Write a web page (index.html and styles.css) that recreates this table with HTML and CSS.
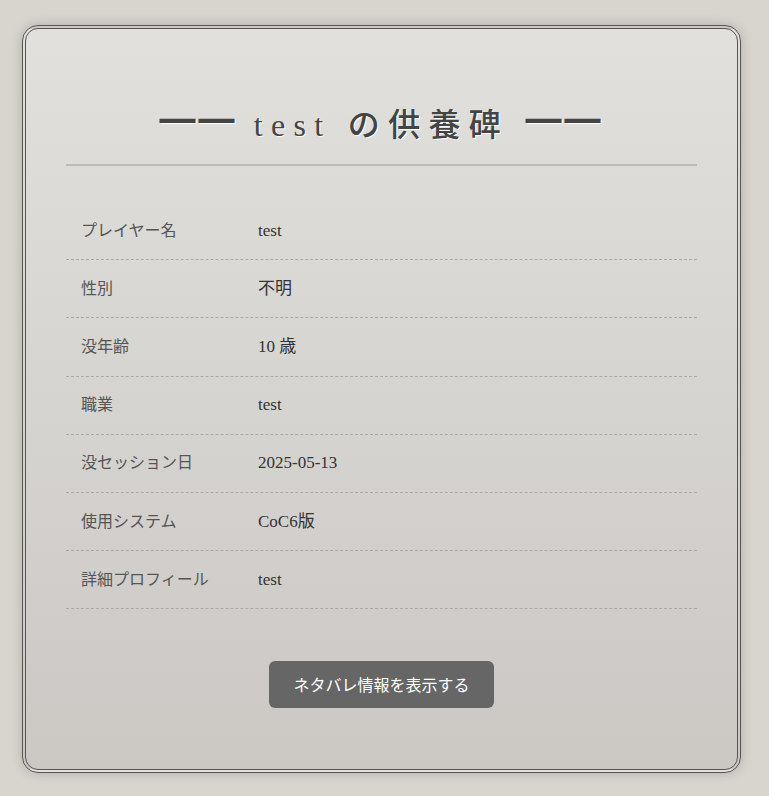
FILE: index.html
```html
<!DOCTYPE html>
<html lang="ja">
<head>
<meta charset="utf-8">
<title>test の供養碑</title>
<link rel="stylesheet" href="styles.css">
</head>
<body>
<main class="card">
  <h1 class="title"><span class="rule">━━</span> test の供養碑 <span class="rule">━━</span></h1>
  <dl class="info">
    <div class="row"><dt>プレイヤー名</dt><dd>test</dd></div>
    <div class="row"><dt>性別</dt><dd>不明</dd></div>
    <div class="row"><dt>没年齢</dt><dd>10 歳</dd></div>
    <div class="row"><dt>職業</dt><dd>test</dd></div>
    <div class="row"><dt>没セッション日</dt><dd>2025-05-13</dd></div>
    <div class="row"><dt>使用システム</dt><dd>CoC6版</dd></div>
    <div class="row"><dt>詳細プロフィール</dt><dd>test</dd></div>
  </dl>
  <div class="actions">
    <button class="reveal" type="button">ネタバレ情報を表示する</button>
  </div>
</main>
</body>
</html>
```
FILE: styles.css
```css
html, body {
  margin: 0;
  padding: 0;
}
body {
  background: #d8d4ce;
  font-family: "Liberation Serif", "Noto Sans CJK JP", serif;
  color: #333;
  padding: 25px 0;
}
.card {
  box-sizing: border-box;
  width: 719px;
  margin: 0 28px 0 22px;
  border: 4px double #555;
  border-radius: 16px;
  background: linear-gradient(to bottom, #e1e0dd, #cbc8c4);
  box-shadow: 0 0 12px rgba(0, 0, 0, 0.18);
  padding: 76px 40px 61px;
}
.title {
  margin: 0;
  padding: 0 0 19px;
  border-bottom: 2px solid #bbb;
  text-align: center;
  font-size: 32px;
  line-height: 40px;
  font-weight: 500;
  letter-spacing: 0.26em;
  color: #444;
  text-shadow: 1px 1px 1px #fff;
}
.rule {
  font-family: "Noto Sans CJK JP", sans-serif;
  font-size: 36px;
  line-height: 0;
  font-weight: 400;
  letter-spacing: 3px;
  vertical-align: 1px;
}
.info {
  margin: 36px 0 0;
}
.row {
  display: flex;
  border-bottom: 1px dashed #aaa;
}
.row dt, .row dd {
  margin: 0;
  padding: 17.6px 15px;
  line-height: 22px;
}
.row dt {
  width: 147px;
  flex: none;
  font-size: 16px;
  color: #555;
}
.row dd {
  flex: 1;
  font-size: 17px;
  color: #333;
}
.actions {
  display: flex;
  justify-content: center;
  margin-top: 52px;
}
.reveal {
  font-family: "Noto Sans CJK JP", "Noto Sans", sans-serif;
  font-size: 16px;
  line-height: 23px;
  color: #fff;
  background: #666;
  border: none;
  border-radius: 6px;
  padding: 12px 24px;
}
```
